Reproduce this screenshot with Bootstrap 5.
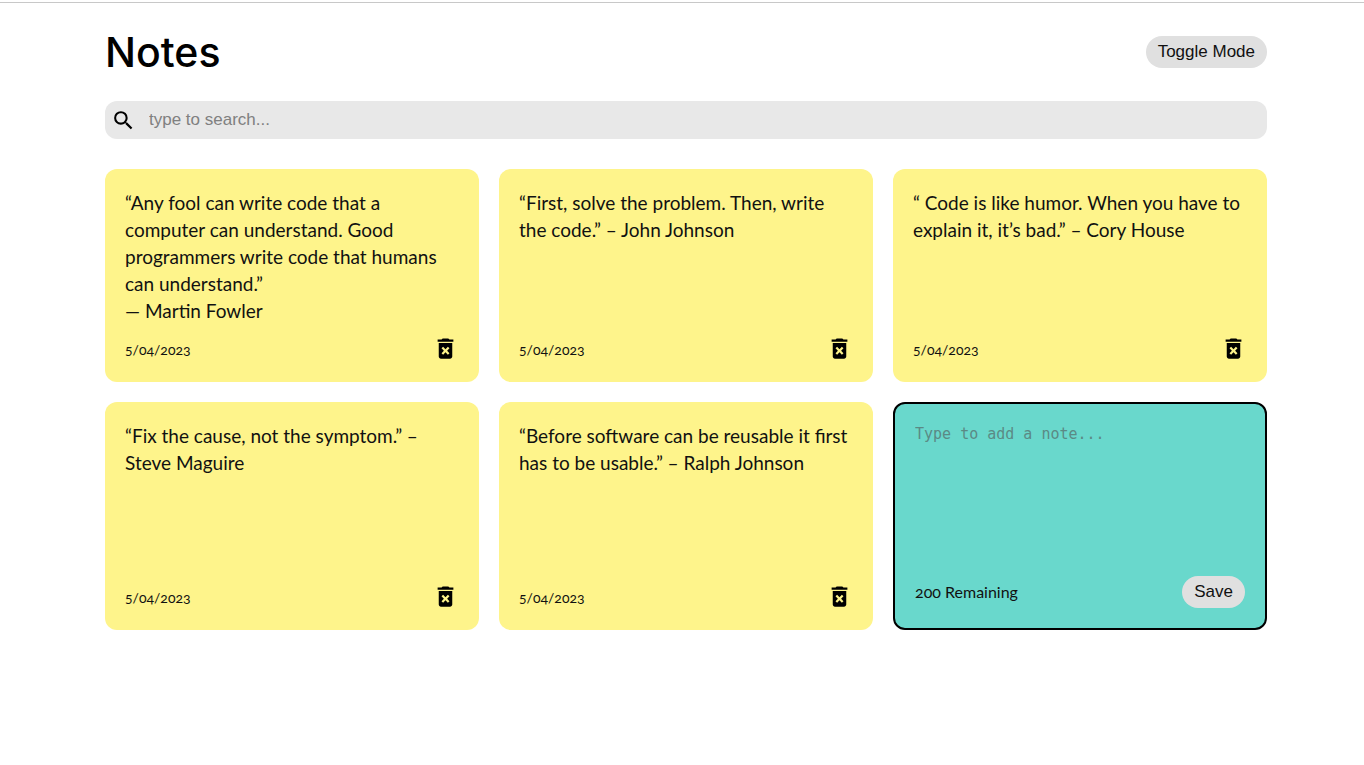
<!DOCTYPE html>
<html lang="en">
<head>
<meta charset="utf-8">
<meta name="viewport" content="width=device-width, initial-scale=1">
<title>Notes</title>
<link href="https://cdn.jsdelivr.net/npm/bootstrap@5.3.0/dist/css/bootstrap.min.css" rel="stylesheet">
<style>
  body { font-family: Lato, sans-serif; color: #111; background: #fff; border-top: 1px solid #fff; }
  .top-rule { height: 2px; border-bottom: 1px solid #c8c8c8; }
  .notes-page { padding: 21px 97px 30px 105px; }
  .page-title { font: 500 41px/56px Inter, sans-serif; color: #000; }
  .pill { font: 17px/20px "Liberation Sans", sans-serif; color: #111; background: #e0e0e0; border: 0; border-radius: 16px; padding: 6px 12px; }
  .pill:hover { background: #d2d2d2; }
  .search-bar { background: #e8e8e8; border-radius: 12px; padding: 6px; margin: 21px 0 30px; }
  .search-bar input { font: 17px/26px "Liberation Sans", sans-serif; color: #111; margin-left: 13px; height: 26px; }
  .search-bar input::placeholder { color: #808080; opacity: 1; }
  .notes-grid { display: grid; grid-template-columns: repeat(3, minmax(0, 1fr)); gap: 20px; }
  .note { background: #fef48b; border-radius: 12px; padding: 20px; }
  .note p { font-size: 19px; line-height: 27px; margin-bottom: 11px; }
  .note-date { font-size: 14px; line-height: 24px; font-variant-numeric: oldstyle-nums; }
  .new-note { background: #69d8cc; border: 2px solid #000; }
  .new-note textarea { height: 152px; resize: none; font: 15px/20px "DejaVu Sans Mono", monospace; color: #111; }
  .new-note textarea::placeholder { color: #5b8a85; opacity: 1; }
  .remaining { font-size: 16px; line-height: 32px; font-variant-numeric: oldstyle-nums; }
  input:focus, textarea:focus { outline: none; }
  @media (max-width: 900px) {
    .notes-page { padding-left: 20px; padding-right: 20px; }
    .notes-grid { grid-template-columns: repeat(auto-fill, minmax(250px, 1fr)); }
  }
</style>
</head>
<body>
<svg class="d-none" aria-hidden="true">
  <symbol id="trash" viewBox="0 0 24 24"><path d="M6 19c0 1.1.9 2 2 2h8c1.1 0 2-.9 2-2V7H6v12zm2.46-7.12l1.41-1.41L12 12.59l2.12-2.12 1.41 1.41L13.41 14l2.12 2.12-1.41 1.41L12 15.41l-2.12 2.12-1.41-1.41L10.59 14l-2.13-2.12zM15.5 4l-1-1h-5l-1 1H5v2h14V4z"/></symbol>
</svg>
<div class="top-rule"></div>
<main class="notes-page">
  <header class="d-flex justify-content-between align-items-center">
    <h1 class="page-title m-0">Notes</h1>
    <button type="button" class="pill">Toggle Mode</button>
  </header>

  <div class="search-bar d-flex align-items-center">
    <label for="search" class="d-flex" aria-label="Search"><svg width="25" height="25" viewBox="0 0 24 24"><path d="M15.5 14h-.79l-.28-.27A6.471 6.471 0 0 0 16 9.5 6.5 6.5 0 1 0 9.5 16c1.61 0 3.09-.59 4.23-1.57l.27.28v.79l5 4.99L20.49 19l-4.99-5zm-6 0C7.01 14 5 11.99 5 9.5S7.01 5 9.5 5 14 7.01 14 9.5 11.99 14 9.5 14z"/></svg></label>
    <input id="search" type="text" class="flex-grow-1 border-0 bg-transparent p-0" placeholder="type to search...">
  </div>

  <section class="notes-grid">
    <article class="note d-flex flex-column justify-content-between">
      <p>“Any fool can write code that a computer can understand. Good programmers write code that humans can understand.”<br>— Martin Fowler</p>
      <div class="d-flex justify-content-between align-items-end">
        <span class="note-date">5/04/2023</span>
        <button type="button" class="btn p-0 border-0 d-flex" aria-label="Delete note"><svg width="27" height="27"><use href="#trash"/></svg></button>
      </div>
    </article>
    <article class="note d-flex flex-column justify-content-between">
      <p>“First, solve the problem. Then, write the code.” – John Johnson</p>
      <div class="d-flex justify-content-between align-items-end">
        <span class="note-date">5/04/2023</span>
        <button type="button" class="btn p-0 border-0 d-flex" aria-label="Delete note"><svg width="27" height="27"><use href="#trash"/></svg></button>
      </div>
    </article>
    <article class="note d-flex flex-column justify-content-between">
      <p>“ Code is like humor. When you have to explain it, it’s bad.” – Cory House</p>
      <div class="d-flex justify-content-between align-items-end">
        <span class="note-date">5/04/2023</span>
        <button type="button" class="btn p-0 border-0 d-flex" aria-label="Delete note"><svg width="27" height="27"><use href="#trash"/></svg></button>
      </div>
    </article>
    <article class="note d-flex flex-column justify-content-between">
      <p>“Fix the cause, not the symptom.” – Steve Maguire</p>
      <div class="d-flex justify-content-between align-items-end">
        <span class="note-date">5/04/2023</span>
        <button type="button" class="btn p-0 border-0 d-flex" aria-label="Delete note"><svg width="27" height="27"><use href="#trash"/></svg></button>
      </div>
    </article>
    <article class="note d-flex flex-column justify-content-between">
      <p>“Before software can be reusable it first has to be usable.” – Ralph Johnson</p>
      <div class="d-flex justify-content-between align-items-end">
        <span class="note-date">5/04/2023</span>
        <button type="button" class="btn p-0 border-0 d-flex" aria-label="Delete note"><svg width="27" height="27"><use href="#trash"/></svg></button>
      </div>
    </article>
    <form class="note new-note d-flex flex-column justify-content-between">
      <textarea class="w-100 border-0 bg-transparent p-0" aria-label="New note" maxlength="200" placeholder="Type to add a note..."></textarea>
      <div class="d-flex justify-content-between align-items-center">
        <span class="remaining">200 Remaining</span>
        <button type="button" class="pill">Save</button>
      </div>
    </form>
  </section>
</main>
<script src="https://cdn.jsdelivr.net/npm/bootstrap@5.3.0/dist/js/bootstrap.bundle.min.js"></script>
</body>
</html>
